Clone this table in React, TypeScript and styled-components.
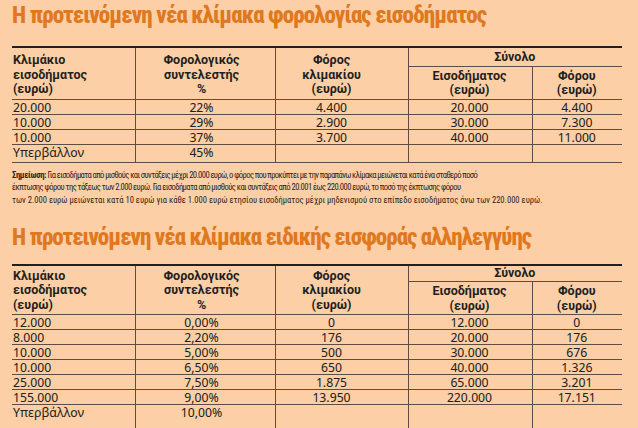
import React from "react";
import styled, { createGlobalStyle } from "styled-components";

const GlobalStyle = createGlobalStyle`
  html, body { margin: 0; padding: 0; background: #fccfa6; }
  body { font-family: "Noto Sans Display", "Liberation Sans", sans-serif; color: #231f20; }
`;

const Page = styled.div`
  width: 638px;
  height: 428px;
  overflow: hidden;
  box-sizing: border-box;
  background: #fccfa6;
  padding: 1px 16px 0 12px;
  display: flex;
  flex-direction: column;
`;

const Title = styled.h1<{ $gap: number; $spacing: number }>`
  margin: 0 0 ${(p) => p.$gap}px;
  font: 800 23px/30px "Roboto Condensed", "Open Sans Condensed", sans-serif;
  letter-spacing: ${(p) => p.$spacing}px;
  color: #e0781e;
  white-space: nowrap;
`;

const Table = styled.table`
  width: 610px;
  border-collapse: collapse;
  table-layout: fixed;
  border-top: 2px solid #231f20;
`;

const lineColor = "#5e4d40";

const HeadCell = styled.th<{ $align: string; $pr: number; $pt: number; $pb: number; $valign?: string }>`
  font: 700 12.5px/14.5px Roboto, "Liberation Sans", sans-serif;
  color: #231f20;
  text-align: ${(p) => p.$align};
  vertical-align: ${(p) => p.$valign || "top"};
  padding: ${(p) => p.$pt}px ${(p) => p.$pr}px ${(p) => p.$pb}px 1px;
  border-bottom: 1px solid ${lineColor};
  border-left: 1px solid ${lineColor};
  &:first-child { border-left: none; }
`;

const SubHeadCell = styled(HeadCell)`
  &:first-child { border-left: 1px solid ${lineColor}; }
`;

const Cell = styled.td<{ $align: string; $pr: number; $last: boolean; $tail: number }>`
  font: 400 13px/14px "Noto Sans Display", "Liberation Sans", sans-serif;
  color: #231f20;
  text-align: ${(p) => p.$align};
  padding: 0 ${(p) => p.$pr}px ${(p) => (p.$last ? p.$tail : 0)}px 1px;
  vertical-align: top;
  border-bottom: ${(p) => (p.$last && p.$tail > 6 ? "none" : `1px solid ${lineColor}`)};
  border-left: 1px solid ${lineColor};
  &:first-child { border-left: none; }
`;

const Note = styled.div`
  margin: 6px 0 0;
  font: 400 8.6px/12.8px "Roboto Condensed", "Liberation Sans", sans-serif;
  color: #2b2522;
  white-space: nowrap;
  strong { font-weight: 700; letter-spacing: -0.35px; }
`;

const NoteLine = styled.div<{ $tracking: number }>`
  letter-spacing: ${(p) => p.$tracking}px;
`;

const Spacer = styled.div`
  height: 16px;
  flex: none;
`;

type Col = { align: string; pr: number; width: number };
const cols: Col[] = [
  { align: "left", pr: 2, width: 123 },
  { align: "center", pr: 8, width: 140 },
  { align: "center", pr: 21, width: 133 },
  { align: "center", pr: 2, width: 124 },
  { align: "center", pr: 2, width: 90 },
];

const Multi = ({ lines }: { lines: string[] }) => (
  <>
    {lines.map((l, i) => (
      <React.Fragment key={i}>
        {i > 0 && <br />}
        {l}
      </React.Fragment>
    ))}
  </>
);

function TaxTable({ rows, tail, headTop }: { rows: string[][]; tail: number; headTop: number }) {
  return (
    <Table>
      <colgroup>
        {cols.map((c, i) => (
          <col key={i} style={{ width: c.width }} />
        ))}
      </colgroup>
      <thead>
        <tr>
          <HeadCell rowSpan={2} $align={cols[0].align} $pr={cols[0].pr} $pt={headTop} $pb={1}>
            <Multi lines={["Κλιμάκιο", "εισοδήματος", "(ευρώ)"]} />
          </HeadCell>
          <HeadCell rowSpan={2} $align={cols[1].align} $pr={cols[1].pr} $pt={headTop} $pb={1}>
            <Multi lines={["Φορολογικός", "συντελεστής", "%"]} />
          </HeadCell>
          <HeadCell rowSpan={2} $align={cols[2].align} $pr={cols[2].pr} $pt={headTop} $pb={1}>
            <Multi lines={["Φόρος", "κλιμακίου", "(ευρώ)"]} />
          </HeadCell>
          <HeadCell colSpan={2} $align="center" $pr={2} $pt={headTop - 3} $pb={1}>
            Σύνολο
          </HeadCell>
        </tr>
        <tr>
          <SubHeadCell $align={cols[3].align} $pr={cols[3].pr} $pt={2} $pb={1} $valign="bottom">
            <Multi lines={["Εισοδήματος", "(ευρώ)"]} />
          </SubHeadCell>
          <SubHeadCell $align={cols[4].align} $pr={cols[4].pr} $pt={2} $pb={1} $valign="bottom">
            <Multi lines={["Φόρου", "(ευρώ)"]} />
          </SubHeadCell>
        </tr>
      </thead>
      <tbody>
        {rows.map((r, ri) => (
          <tr key={ri}>
            {r.map((v, ci) => (
              <Cell
                key={ci}
                $align={cols[ci].align}
                $pr={cols[ci].pr}
                $last={ri === rows.length - 1}
                $tail={tail}
              >
                {v}
              </Cell>
            ))}
          </tr>
        ))}
      </tbody>
    </Table>
  );
}

const incomeRows = [
  ["20.000", "22%", "4.400", "20.000", "4.400"],
  ["10.000", "29%", "2.900", "30.000", "7.300"],
  ["10.000", "37%", "3.700", "40.000", "11.000"],
  ["Υπερβάλλον", "45%", "", "", ""],
];

const solidarityRows = [
  ["12.000", "0,00%", "0", "12.000", "0"],
  ["8.000", "2,20%", "176", "20.000", "176"],
  ["10.000", "5,00%", "500", "30.000", "676"],
  ["10.000", "6,50%", "650", "40.000", "1.326"],
  ["25.000", "7,50%", "1.875", "65.000", "3.201"],
  ["155.000", "9,00%", "13.950", "220.000", "17.151"],
  ["Υπερβάλλον", "10,00%", "", "", ""],
];

export default function App() {
  return (
    <>
      <GlobalStyle />
      <Page>
        <Title $gap={15} $spacing={-0.85}>
          Η προτεινόμενη νέα κλίμακα φορολογίας εισοδήματος
        </Title>
        <TaxTable rows={incomeRows} tail={3} headTop={5} />
        <Note>
          <NoteLine $tracking={-0.6}>
            <strong>Σημείωση:</strong> Για εισοδήματα από μισθούς και συντάξεις μέχρι 20.000 ευρώ, ο φόρος που
            προκύπτει με την παραπάνω κλίμακα μειώνεται κατά ένα σταθερό ποσό
          </NoteLine>
          <NoteLine $tracking={-0.55}>
            έκπτωσης φόρου της τάξεως των 2.000 ευρώ. Για εισοδήματα από μισθούς και συντάξεις από 20.001 έως
            220.000 ευρώ, το ποσό της έκπτωσης φόρου
          </NoteLine>
          <NoteLine $tracking={0}>
            των 2.000 ευρώ μειώνεται κατά 10 ευρώ για κάθε 1.000 ευρώ ετησίου εισοδήματος μέχρι μηδενισμού στο
            επίπεδο εισοδήματος άνω των 220.000 ευρώ.
          </NoteLine>
        </Note>
        <Spacer />
        <Title $gap={11} $spacing={-0.95}>
          Η προτεινόμενη νέα κλίμακα ειδικής εισφοράς αλληλεγγύης
        </Title>
        <TaxTable rows={solidarityRows} tail={20} headTop={3} />
      </Page>
    </>
  );
}
